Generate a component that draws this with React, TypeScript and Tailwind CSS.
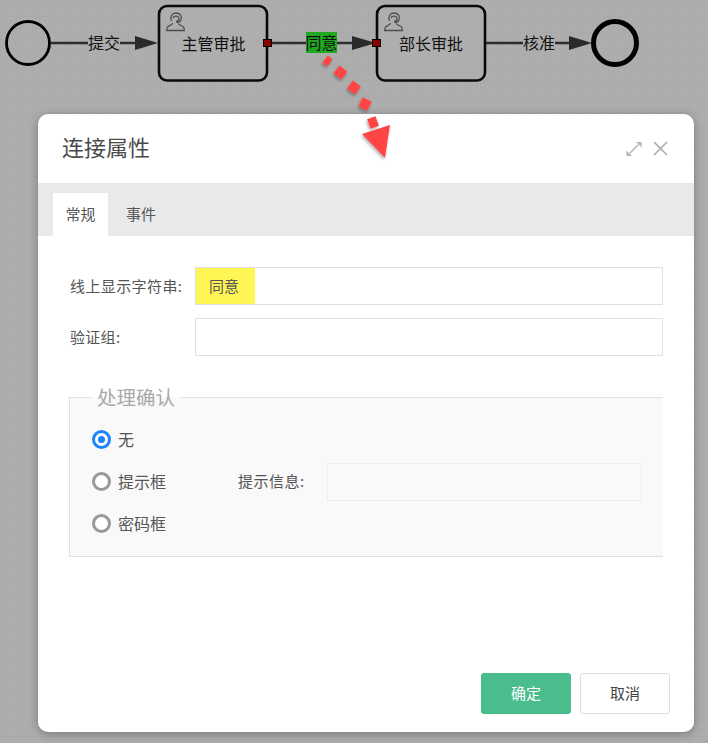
import React from "react";

const font = "font-['Noto_Sans_CJK_SC','Liberation_Sans',sans-serif]";

function Person({ x, y }: { x: number; y: number }) {
  return (
    <g transform={`translate(${x} ${y})`} fill="none" stroke="#4d4d4d" strokeWidth="1.3">
      <path d="M5.5 9 C3.5 5 6 1 10 1 C14 1 16.5 4.5 15 8 C14.3 9.5 12.5 10.5 10.5 10.5" />
      <path d="M7 6 C8 3.5 12 3.5 13 6 C13.3 8 12 9.5 10 9.5" />
      <path d="M6.5 11 C6.5 13 3 13.5 1.5 15 C0.8 16 0.7 17 0.7 18.5 H18.3 C18.3 17 18.2 16 17.5 15 C16 13.5 12.5 13 12.5 11.5" />
    </g>
  );
}

function Diagram() {
  return (
    <svg width="708" height="114" className="block">
      <g stroke="#2e2e2e" strokeWidth="2.6" fill="none">
        <path d="M51 43 H138" />
        <path d="M267 43 H355" />
        <path d="M485 43 H575" />
      </g>
      <g fill="#2a2a2a">
        <path d="M135 36 L158 43 L135 50 Z" />
        <path d="M352 36 L376 43 L352 50 Z" />
        <path d="M569 36 L592 43 L569 50 Z" />
      </g>
      <circle cx="28" cy="43" r="21.5" fill="none" stroke="#000" strokeWidth="2.8" />
      <circle cx="615" cy="43" r="21.5" fill="none" stroke="#000" strokeWidth="5" />
      <rect x="159" y="6" width="108" height="74.5" rx="8" fill="#aeaeae" stroke="#0a0a0a" strokeWidth="2.6" />
      <rect x="377" y="6" width="108" height="74.5" rx="8" fill="#aeaeae" stroke="#0a0a0a" strokeWidth="2.6" />
      <Person x={166} y={12} />
      <Person x={384} y={12} />
      <rect x="88" y="34" width="32" height="19" fill="#adadad" />
      <rect x="523" y="34" width="32" height="19" fill="#adadad" />
      <rect x="306" y="32" width="31" height="21" fill="#21a821" />
      <rect x="263.5" y="39.5" width="8" height="7" fill="#8a0000" stroke="#000" />
      <rect x="372.5" y="39.5" width="8" height="7" fill="#8a0000" stroke="#000" />
      <g fontSize="16" fill="#111" textAnchor="middle" fontFamily="'Noto Sans CJK SC', sans-serif">
        <text x="104" y="49">提交</text>
        <text x="213.5" y="50">主管审批</text>
        <text x="321.5" y="49">同意</text>
        <text x="431" y="50">部长审批</text>
        <text x="539" y="49">核准</text>
      </g>
    </svg>
  );
}

function RedArrow() {
  return (
    <svg width="708" height="180" className="absolute left-0 top-0 pointer-events-none">
      <defs>
        <filter id="s" x="-30%" y="-30%" width="180%" height="180%">
          <feDropShadow dx="-1" dy="2" stdDeviation="1.5" floodColor="#000" floodOpacity="0.3" />
        </filter>
      </defs>
      <g fill="#ff4545" filter="url(#s)">
        <rect x="-3" y="-4.5" width="6" height="9" transform="translate(327.5 61) rotate(37)" />
        <rect x="-5" y="-5" width="10" height="10" transform="translate(340.5 72.5) rotate(38)" />
        <rect x="-5" y="-5" width="10" height="10" transform="translate(354 87.5) rotate(35)" />
        <rect x="-5" y="-5" width="10" height="10" transform="translate(365 104) rotate(27)" />
        <rect x="-4.5" y="-5" width="9" height="10" transform="translate(373 122.5) rotate(-20)" />
        <path d="M362 134 L390 125 L385 158 Z" />
      </g>
    </svg>
  );
}

function Radio({ checked }: { checked?: boolean }) {
  return checked ? (
    <span className="w-[19px] h-[19px] rounded-full border-[3px] border-[#1a85ff] bg-white flex items-center justify-center shrink-0">
      <span className="w-[7px] h-[7px] rounded-full bg-[#1a85ff]" />
    </span>
  ) : (
    <span className="w-[19px] h-[19px] rounded-full border-[3px] border-[#999999] bg-white shrink-0" />
  );
}

export default function App() {
  return (
    <div
      className={`${font} relative w-[708px] h-[743px] overflow-hidden bg-[#adadad] bg-[linear-gradient(#aaaaaa_1px,transparent_1px),linear-gradient(90deg,#aaaaaa_1px,transparent_1px)] bg-[size:16px_16px]`}
    >
      <Diagram />
      <div className="ml-[38px] w-[656px] h-[618px] bg-white rounded-[10px] shadow-[0_2px_10px_rgba(0,0,0,0.3)] flex flex-col overflow-hidden">
        <div className="h-[69px] flex items-center pl-[24px] pr-[26px] shrink-0">
          <span className="text-[22px] leading-none text-[#4a4a4a] pb-[5px]">连接属性</span>
          <div className="ml-auto flex items-center gap-[11px]">
            <svg width="16" height="16" viewBox="0 0 16 16" fill="none">
              <path d="M4 12 L12 4" stroke="#b5b5b5" strokeWidth="1.6" />
              <path d="M10 1 H15.5 V6.5 Z" fill="#b5b5b5" />
              <path d="M0.5 9.5 V15 H6 Z" fill="#b5b5b5" />
            </svg>
            <svg width="15" height="15" viewBox="0 0 15 15" fill="none">
              <path d="M1 1 L14 14 M14 1 L1 14" stroke="#a8a8a8" strokeWidth="1.5" />
            </svg>
          </div>
        </div>
        <div className="h-[53px] bg-[#e9e9e9] flex items-end pl-[15px] shrink-0">
          <div className="w-[55px] h-[43px] bg-white flex items-center justify-center text-[15px] text-[#555555]">常规</div>
          <div className="w-[66px] h-[43px] flex items-center justify-center text-[15px] text-[#555555]">事件</div>
        </div>
        <div className="flex-1 flex flex-col pl-[31px] pr-[31px] pt-[31px]">
          <div className="flex items-center h-[38px]">
            <span className="w-[126px] pl-[1px] text-[15px] tracking-[0.4px] text-[#555555] whitespace-nowrap">线上显示字符串:</span>
            <div className="flex-1 h-[38px] border border-[#e0e0e0] bg-white">
              <div className="w-[59px] h-full bg-[#fff555] flex items-center pl-[13px] text-[15px] text-[#555555]">同意</div>
            </div>
          </div>
          <div className="flex items-center h-[38px] mt-[13px]">
            <span className="w-[126px] pl-[1px] text-[15px] tracking-[0.3px] text-[#555555]">验证组:</span>
            <div className="flex-1 h-[38px] border border-[#e0e0e0] bg-white" />
          </div>
          <fieldset className="mt-[27px] h-[174px] border border-r-0 border-[#e0e0e0] bg-[#f9f9f9] pl-[22px]">
            <legend className="-ml-[1px] px-[6px] text-[19.5px] leading-[28px] text-[#a8a8a8]">处理确认</legend>
            <div className="flex items-center h-[42px] mt-[7px] gap-[7px] text-[16px] text-[#555555]">
              <Radio checked />
              <span>无</span>
            </div>
            <div className="flex items-center h-[42px] gap-[7px] text-[16px] text-[#555555]">
              <Radio />
              <span className="w-[113px]">提示框</span>
              <span className="text-[15px] tracking-[0.5px] w-[82px] whitespace-nowrap">提示信息:</span>
              <div className="w-[315px] h-[38px] mt-[2px] border border-[#eeeeee] bg-[#f9f9f9]" />
            </div>
            <div className="flex items-center h-[42px] gap-[7px] text-[16px] text-[#555555]">
              <Radio />
              <span>密码框</span>
            </div>
          </fieldset>
        </div>
        <div className="flex justify-end gap-[9px] pr-[24px] pb-[18px] shrink-0">
          <div className="w-[90px] h-[41px] rounded-[3px] bg-[#4abd8c] text-white text-[15px] flex items-center justify-center">确定</div>
          <div className="w-[90px] h-[41px] rounded-[3px] bg-white border border-[#dddddd] text-[#444444] text-[15px] flex items-center justify-center">取消</div>
        </div>
      </div>
      <RedArrow />
    </div>
  );
}
